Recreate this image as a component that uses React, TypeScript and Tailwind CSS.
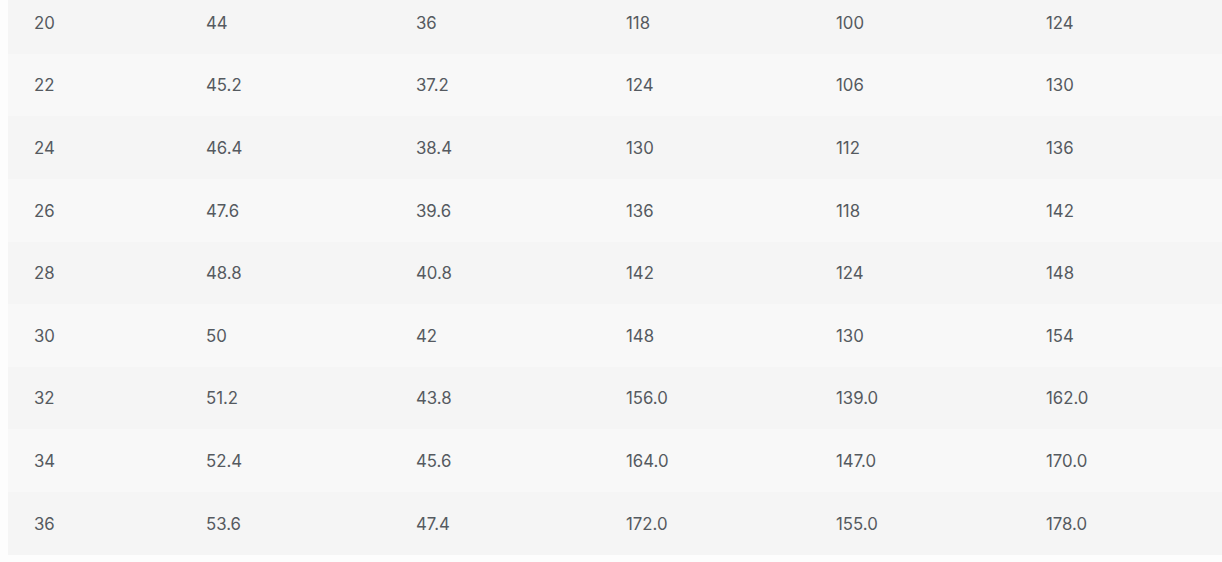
import React from "react";

const rows: string[][] = [
  ["20", "44", "36", "118", "100", "124"],
  ["22", "45.2", "37.2", "124", "106", "130"],
  ["24", "46.4", "38.4", "130", "112", "136"],
  ["26", "47.6", "39.6", "136", "118", "142"],
  ["28", "48.8", "40.8", "142", "124", "148"],
  ["30", "50", "42", "148", "130", "154"],
  ["32", "51.2", "43.8", "156.0", "139.0", "162.0"],
  ["34", "52.4", "45.6", "164.0", "147.0", "170.0"],
  ["36", "53.6", "47.4", "172.0", "155.0", "178.0"],
];

export default function App() {
  return (
    <div className="w-[1222px] h-[562px] overflow-hidden bg-[#fdfdfd] font-['Inter',sans-serif]">
      <div className="ml-2 mt-[-9px] flex flex-col">
        {rows.map((r, i) => (
          <div
            key={i}
            className={`grid grid-cols-[172px_210px_210px_210px_210px_1fr] h-[62.63px] items-center text-[16.8px] text-[#555a60] ${
              i % 2 === 0 ? "bg-[#f5f5f5]" : "bg-[#f8f8f8]"
            }`}
          >
            {r.map((c, j) => (
              <div key={j} className="pl-[26px] pt-[2px]">
                {c}
              </div>
            ))}
          </div>
        ))}
      </div>
    </div>
  );
}
